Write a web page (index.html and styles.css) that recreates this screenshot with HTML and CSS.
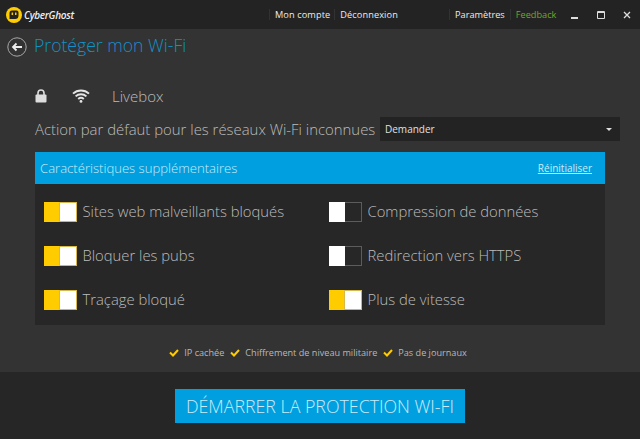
FILE: index.html
```html
<!DOCTYPE html>
<html lang="fr">
  <head>
    <meta charset="UTF-8" />
    <title>CyberGhost</title>
    <link rel="stylesheet" href="styles.css">
  </head>
  <body>
    <header class="topbar">
      <div class="brand">
        <svg class="brand-icon" width="16" height="16" viewBox="0 0 16 16">
          <circle cx="8" cy="8" r="8" fill="#ffcc00" />
          <path d="M3.500 12V6a2.500 2.500 0 0 1 2.500-2.500h4.500A2 2 0 0 1 12.500 5.500V8.500a3.500 3.500 0 0 1-3.500 3.500z" fill="#222" />
          <rect x="5.600" y="5.500" width="1.500" height="2.500" fill="#ffcc00" />
          <rect x="9" y="5.500" width="1.500" height="2.500" fill="#ffcc00" />
        </svg>
        <span class="brand-name">CyberGhost</span>
      </div>
      <nav class="nav nav-account">
        <a>Mon compte</a>
        <a>Déconnexion</a>
      </nav>
      <nav class="nav nav-app">
        <a>Paramètres</a>
        <a class="feedback">Feedback</a>
      </nav>
      <div class="window-buttons">
        <svg width="10" height="10" viewBox="0 0 10 10"><rect x="1" y="7" width="7" height="2" fill="#ddd" /></svg>
        <svg width="10" height="10" viewBox="0 0 10 10"><path d="M1.500 1.500h7v7h-7z M1.500 2.500h7" fill="none" stroke="#ddd" /></svg>
        <svg width="10" height="10" viewBox="0 0 10 10"><path d="M2 2l6 6M8 2l-6 6" fill="none" stroke="#ddd" stroke-width="1.300" /></svg>
      </div>
    </header>

    <main class="content">
      <div class="title-row">
        <svg width="20" height="20" viewBox="0 0 20 20">
          <circle cx="10" cy="10" r="9.200" fill="none" stroke="#a8a8a8" stroke-width="1" />
          <path d="M15 10H6M9.500 6.500L6 10l3.500 3.500" fill="none" stroke="#eee" stroke-width="1.800" />
        </svg>
        <h1>Protéger mon Wi-Fi</h1>
      </div>

      <div class="network">
        <svg class="lock" width="12" height="14" viewBox="0 0 12 14">
          <path d="M3 6V4a3 3 0 0 1 6 0v2" fill="none" stroke="#ddd" stroke-width="1.600" />
          <rect x="0.500" y="5.500" width="11" height="8" rx="1" fill="#ddd" />
        </svg>
        <svg class="wifi" width="18" height="14" viewBox="0 0 18 14">
          <path d="M1 4.600c4.500-4.200 11.500-4.200 16 0M3.600 7.400c3-2.800 7.800-2.800 10.800 0M6.200 10c1.600-1.400 4-1.400 5.600 0" fill="none" stroke="#e4e4e4" stroke-width="1.900" />
          <circle cx="9" cy="12.400" r="1.400" fill="#e4e4e4" />
        </svg>
        <span class="network-name">Livebox</span>
      </div>

      <div class="action-row">
        <span class="action-label">Action par défaut pour les réseaux Wi-Fi inconnues</span>
        <div class="select">
          <span>Demander</span>
          <span class="select-arrow"></span>
        </div>
      </div>

      <section class="panel">
        <div class="panel-head">
          <span class="panel-title">Caractéristiques supplémentaires</span>
          <a class="reset">Réinitialiser</a>
        </div>
        <div class="panel-grid">
          <div class="feature"><span class="toggle on"><i></i></span>Sites web malveillants bloqués</div>
          <div class="feature"><span class="toggle"><i></i></span>Compression de données</div>
          <div class="feature"><span class="toggle on"><i></i></span>Bloquer les pubs</div>
          <div class="feature"><span class="toggle"><i></i></span>Redirection vers HTTPS</div>
          <div class="feature"><span class="toggle on"><i></i></span>Traçage bloqué</div>
          <div class="feature"><span class="toggle on"><i></i></span>Plus de vitesse</div>
        </div>
      </section>

      <ul class="perks">
        <li><svg width="10" height="8" viewBox="0 0 10 8"><path d="M1 3.500l3 3 5-5.500" fill="none" stroke="#ffcc00" stroke-width="2" /></svg>IP cachée</li>
        <li><svg width="10" height="8" viewBox="0 0 10 8"><path d="M1 3.500l3 3 5-5.500" fill="none" stroke="#ffcc00" stroke-width="2" /></svg>Chiffrement de niveau militaire</li>
        <li><svg width="10" height="8" viewBox="0 0 10 8"><path d="M1 3.500l3 3 5-5.500" fill="none" stroke="#ffcc00" stroke-width="2" /></svg>Pas de journaux</li>
      </ul>
    </main>

    <footer class="footer">
      <button class="start">DÉMARRER LA PROTECTION WI-FI</button>
    </footer>
  </body>
</html>
```

FILE: styles.css
```css
html,
body {
  height: 100%;
}
body {
  margin: 0;
  width: 640px;
  height: 439px;
  overflow: hidden;
  display: flex;
  flex-direction: column;
  background-color: #333333;
  color: #bcbcbc;
  font-family: "Open Sans", sans-serif;
  font-weight: 300;
}
.topbar {
  height: 29px;
  flex: none;
  display: flex;
  align-items: center;
  background-color: #232323;
  color: #ececec;
  font-size: 9.200px;
  font-weight: 400;
}
.brand {
  display: flex;
  flex: none;
  align-items: center;
  width: 269px;
  padding-left: 6px;
  box-sizing: border-box;
}
.brand-name {
  margin-left: 2px;
  font-style: italic;
  font-weight: 600;
  font-size: 10px;
  letter-spacing: -0.300px;
  color: #eeeeee;
}
.nav {
  display: flex;
  flex: none;
}
.nav a {
  padding-left: 5px;
  border-left: 1px solid #323232;
  line-height: 11px;
}
.nav-account {
  width: 180px;
  gap: 4px;
}
.nav-account a {
  letter-spacing: 0.100px;
}
.nav-app {
  width: 102px;
  gap: 5px;
}
.feedback {
  color: #74a52e;
}
.window-buttons {
  margin-left: 19px;
  display: flex;
  flex: none;
  gap: 16px;
}
.content {
  flex: 1;
  padding: 0 20px 0 35px;
  display: flex;
  flex-direction: column;
}
.title-row {
  margin: 8px 0 0 -28px;
  display: flex;
  align-items: center;
  gap: 7px;
  height: 20px;
}
h1 {
  margin: 0 0 4px;
  font-size: 17.600px;
  font-weight: 300;
  color: #1490c8;
}
.network {
  margin-top: 29px;
  display: flex;
  align-items: center;
  height: 20px;
}
.lock {
  margin-right: 25px;
}
.wifi {
  margin-right: 22px;
}
.network-name {
  font-size: 15px;
}
.action-row {
  margin-top: 11px;
  display: flex;
  align-items: center;
  justify-content: space-between;
  height: 24px;
}
.action-label {
  font-size: 14.900px;
  white-space: nowrap;
}
.select {
  width: 240px;
  height: 24px;
  padding: 0 8px 0 5px;
  box-sizing: border-box;
  display: flex;
  flex: none;
  align-items: center;
  justify-content: space-between;
  background-color: #232323;
  color: #e0e0e0;
  font-size: 10px;
  font-weight: 400;
}
.select-arrow {
  border-top: 3px solid #dddddd;
  border-left: 3px solid transparent;
  border-right: 3px solid transparent;
}
.panel {
  margin-top: 11px;
  margin-right: 15px;
  background-color: #272727;
}
.panel-head {
  height: 32px;
  padding: 0 13px 0 5px;
  display: flex;
  align-items: center;
  justify-content: space-between;
  background-color: #00a0e0;
  color: #cdeaf6;
}
.panel-title {
  font-size: 13.100px;
}
.reset {
  font-size: 10px;
  font-weight: 400;
  text-decoration: underline;
}
.panel-grid {
  padding: 6px 0 3px 9px;
  display: grid;
  grid-template-columns: 285px 1fr;
  grid-auto-rows: 44px;
  font-size: 14.800px;
}
.feature {
  display: flex;
  align-items: center;
  gap: 5.500px;
  padding-bottom: 2px;
  white-space: nowrap;
}
.toggle {
  width: 33px;
  height: 20px;
  margin-top: 2px;
  box-sizing: border-box;
  display: flex;
  flex: none;
  border: 1px solid #5c5c5c;
}
.toggle i {
  width: 16px;
  margin: -1px 0 -1px -1px;
  background-color: #ffffff;
}
.toggle.on {
  flex-direction: row-reverse;
  background-color: #ffcc00;
  border: none;
}
.toggle.on i {
  margin: 0;
  border: 1px solid #d8b84a;
}
.perks {
  margin: 21px 19px 0 0;
  padding: 0;
  list-style: none;
  display: flex;
  justify-content: center;
  gap: 6px;
  font-size: 9.150px;
  font-weight: 400;
  color: #b8b8b8;
}
.perks li {
  display: flex;
  align-items: center;
  gap: 5px;
}
.footer {
  height: 67px;
  flex: none;
  display: flex;
  align-items: center;
  justify-content: center;
  background-color: #262626;
}
.start {
  width: 290px;
  height: 34px;
  padding: 0;
  border: none;
  background-color: #00a0e0;
  color: #cdeaf6;
  font-family: inherit;
  font-size: 17.800px;
  font-weight: 300;
}
```
